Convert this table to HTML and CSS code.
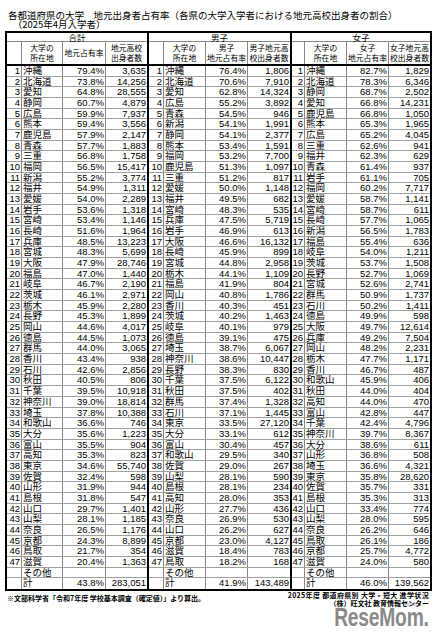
FILE: index.html
```html
<!DOCTYPE html>
<html lang="ja">
<head>
<meta charset="utf-8">
<link rel="stylesheet" href="styles.css">
</head>
<body>
<div class="title">
<p>各都道府県の大学　地元出身者占有率（各県の大学入学者における地元高校出身者の割合）</p>
<p>　（2025年4月入学者）</p>
</div>
<div class="tbl">
<div class="sec sec-all">
<div class="sec-h">合計</div>
<div class="hdr"><span></span><span>大学の<br>所在地</span><span>地元占有率</span><span>地元高校<br>出身者数</span></div>
<div class="row"><span class="rk">1</span><span class="pf">沖縄</span><span class="n">79.4%</span><span class="n">3,635</span></div>
<div class="row"><span class="rk">2</span><span class="pf">北海道</span><span class="n">73.8%</span><span class="n">14,256</span></div>
<div class="row"><span class="rk">3</span><span class="pf">愛知</span><span class="n">64.8%</span><span class="n">28,555</span></div>
<div class="row"><span class="rk">4</span><span class="pf">静岡</span><span class="n">60.7%</span><span class="n">4,879</span></div>
<div class="row"><span class="rk">5</span><span class="pf">広島</span><span class="n">59.9%</span><span class="n">7,937</span></div>
<div class="row"><span class="rk">6</span><span class="pf">熊本</span><span class="n">59.4%</span><span class="n">3,556</span></div>
<div class="row"><span class="rk">7</span><span class="pf">鹿児島</span><span class="n">57.9%</span><span class="n">2,147</span></div>
<div class="row"><span class="rk">8</span><span class="pf">青森</span><span class="n">57.7%</span><span class="n">1,883</span></div>
<div class="row"><span class="rk">9</span><span class="pf">三重</span><span class="n">56.8%</span><span class="n">1,758</span></div>
<div class="row"><span class="rk">10</span><span class="pf">福岡</span><span class="n">56.5%</span><span class="n">15,417</span></div>
<div class="row"><span class="rk">11</span><span class="pf">新潟</span><span class="n">55.2%</span><span class="n">3,774</span></div>
<div class="row"><span class="rk">12</span><span class="pf">福井</span><span class="n">54.9%</span><span class="n">1,311</span></div>
<div class="row"><span class="rk">13</span><span class="pf">愛媛</span><span class="n">54.0%</span><span class="n">2,289</span></div>
<div class="row"><span class="rk">14</span><span class="pf">岩手</span><span class="n">53.6%</span><span class="n">1,318</span></div>
<div class="row"><span class="rk">15</span><span class="pf">宮崎</span><span class="n">53.4%</span><span class="n">1,146</span></div>
<div class="row"><span class="rk">16</span><span class="pf">長崎</span><span class="n">51.6%</span><span class="n">1,964</span></div>
<div class="row"><span class="rk">17</span><span class="pf">兵庫</span><span class="n">48.5%</span><span class="n">13,223</span></div>
<div class="row"><span class="rk">18</span><span class="pf">宮城</span><span class="n">48.3%</span><span class="n">5,699</span></div>
<div class="row"><span class="rk">19</span><span class="pf">大阪</span><span class="n">47.9%</span><span class="n">28,746</span></div>
<div class="row"><span class="rk">20</span><span class="pf">福島</span><span class="n">47.0%</span><span class="n">1,440</span></div>
<div class="row"><span class="rk">21</span><span class="pf">岐阜</span><span class="n">46.7%</span><span class="n">2,190</span></div>
<div class="row"><span class="rk">22</span><span class="pf">茨城</span><span class="n">46.1%</span><span class="n">2,971</span></div>
<div class="row"><span class="rk">23</span><span class="pf">栃木</span><span class="n">45.9%</span><span class="n">2,280</span></div>
<div class="row"><span class="rk">24</span><span class="pf">長野</span><span class="n">45.3%</span><span class="n">1,899</span></div>
<div class="row"><span class="rk">25</span><span class="pf">岡山</span><span class="n">44.6%</span><span class="n">4,017</span></div>
<div class="row"><span class="rk">26</span><span class="pf">徳島</span><span class="n">44.5%</span><span class="n">1,073</span></div>
<div class="row"><span class="rk">27</span><span class="pf">群馬</span><span class="n">44.0%</span><span class="n">3,065</span></div>
<div class="row"><span class="rk">28</span><span class="pf">香川</span><span class="n">43.4%</span><span class="n">938</span></div>
<div class="row"><span class="rk">29</span><span class="pf">石川</span><span class="n">42.6%</span><span class="n">2,856</span></div>
<div class="row"><span class="rk">30</span><span class="pf">秋田</span><span class="n">40.5%</span><span class="n">806</span></div>
<div class="row"><span class="rk">31</span><span class="pf">千葉</span><span class="n">39.5%</span><span class="n">10,918</span></div>
<div class="row"><span class="rk">32</span><span class="pf">神奈川</span><span class="n">39.0%</span><span class="n">18,814</span></div>
<div class="row"><span class="rk">33</span><span class="pf">埼玉</span><span class="n">37.8%</span><span class="n">10,388</span></div>
<div class="row"><span class="rk">34</span><span class="pf">和歌山</span><span class="n">36.6%</span><span class="n">746</span></div>
<div class="row"><span class="rk">35</span><span class="pf">大分</span><span class="n">35.6%</span><span class="n">1,223</span></div>
<div class="row"><span class="rk">36</span><span class="pf">富山</span><span class="n">35.5%</span><span class="n">904</span></div>
<div class="row"><span class="rk">37</span><span class="pf">高知</span><span class="n">35.3%</span><span class="n">823</span></div>
<div class="row"><span class="rk">38</span><span class="pf">東京</span><span class="n">34.6%</span><span class="n">55,740</span></div>
<div class="row"><span class="rk">39</span><span class="pf">佐賀</span><span class="n">32.4%</span><span class="n">598</span></div>
<div class="row"><span class="rk">40</span><span class="pf">山形</span><span class="n">31.9%</span><span class="n">944</span></div>
<div class="row"><span class="rk">41</span><span class="pf">島根</span><span class="n">31.8%</span><span class="n">547</span></div>
<div class="row"><span class="rk">42</span><span class="pf">山口</span><span class="n">29.7%</span><span class="n">1,401</span></div>
<div class="row"><span class="rk">43</span><span class="pf">山梨</span><span class="n">28.1%</span><span class="n">1,185</span></div>
<div class="row"><span class="rk">44</span><span class="pf">奈良</span><span class="n">26.5%</span><span class="n">1,176</span></div>
<div class="row"><span class="rk">45</span><span class="pf">京都</span><span class="n">24.3%</span><span class="n">8,899</span></div>
<div class="row"><span class="rk">46</span><span class="pf">鳥取</span><span class="n">21.7%</span><span class="n">354</span></div>
<div class="row"><span class="rk">47</span><span class="pf">滋賀</span><span class="n">20.4%</span><span class="n">1,363</span></div>
<div class="row"><span class="rk"></span><span class="pf">その他</span><span class="n"></span><span class="n"></span></div>
<div class="row"><span class="rk"></span><span class="pf">計</span><span class="n">43.8%</span><span class="n">283,051</span></div>
</div>
<div class="sec sec-m">
<div class="sec-h">男子</div>
<div class="hdr"><span></span><span>大学の<br>所在地</span><span>男子<br>地元占有率</span><span>男子地元高<br>校出身者数</span></div>
<div class="row"><span class="rk">1</span><span class="pf">沖縄</span><span class="n">76.4%</span><span class="n">1,806</span></div>
<div class="row"><span class="rk">2</span><span class="pf">北海道</span><span class="n">70.6%</span><span class="n">7,910</span></div>
<div class="row"><span class="rk">3</span><span class="pf">愛知</span><span class="n">62.8%</span><span class="n">14,324</span></div>
<div class="row"><span class="rk">4</span><span class="pf">広島</span><span class="n">55.2%</span><span class="n">3,892</span></div>
<div class="row"><span class="rk">5</span><span class="pf">青森</span><span class="n">54.5%</span><span class="n">946</span></div>
<div class="row"><span class="rk">6</span><span class="pf">新潟</span><span class="n">54.1%</span><span class="n">1,991</span></div>
<div class="row"><span class="rk">7</span><span class="pf">静岡</span><span class="n">54.1%</span><span class="n">2,377</span></div>
<div class="row"><span class="rk">8</span><span class="pf">熊本</span><span class="n">53.4%</span><span class="n">1,591</span></div>
<div class="row"><span class="rk">9</span><span class="pf">福岡</span><span class="n">53.2%</span><span class="n">7,700</span></div>
<div class="row"><span class="rk">10</span><span class="pf">鹿児島</span><span class="n">51.3%</span><span class="n">1,097</span></div>
<div class="row"><span class="rk">11</span><span class="pf">三重</span><span class="n">51.2%</span><span class="n">817</span></div>
<div class="row"><span class="rk">12</span><span class="pf">愛媛</span><span class="n">50.0%</span><span class="n">1,148</span></div>
<div class="row"><span class="rk">13</span><span class="pf">福井</span><span class="n">49.5%</span><span class="n">682</span></div>
<div class="row"><span class="rk">14</span><span class="pf">宮崎</span><span class="n">48.3%</span><span class="n">535</span></div>
<div class="row"><span class="rk">15</span><span class="pf">兵庫</span><span class="n">47.5%</span><span class="n">5,719</span></div>
<div class="row"><span class="rk">16</span><span class="pf">岩手</span><span class="n">46.9%</span><span class="n">613</span></div>
<div class="row"><span class="rk">17</span><span class="pf">大阪</span><span class="n">46.6%</span><span class="n">16,132</span></div>
<div class="row"><span class="rk">18</span><span class="pf">長崎</span><span class="n">45.9%</span><span class="n">899</span></div>
<div class="row"><span class="rk">19</span><span class="pf">宮城</span><span class="n">44.8%</span><span class="n">2,958</span></div>
<div class="row"><span class="rk">20</span><span class="pf">栃木</span><span class="n">44.1%</span><span class="n">1,109</span></div>
<div class="row"><span class="rk">21</span><span class="pf">福島</span><span class="n">41.9%</span><span class="n">804</span></div>
<div class="row"><span class="rk">22</span><span class="pf">岡山</span><span class="n">40.8%</span><span class="n">1,786</span></div>
<div class="row"><span class="rk">23</span><span class="pf">香川</span><span class="n">40.3%</span><span class="n">451</span></div>
<div class="row"><span class="rk">24</span><span class="pf">茨城</span><span class="n">40.2%</span><span class="n">1,463</span></div>
<div class="row"><span class="rk">25</span><span class="pf">岐阜</span><span class="n">40.1%</span><span class="n">979</span></div>
<div class="row"><span class="rk">26</span><span class="pf">徳島</span><span class="n">39.1%</span><span class="n">475</span></div>
<div class="row"><span class="rk">27</span><span class="pf">埼玉</span><span class="n">38.7%</span><span class="n">6,067</span></div>
<div class="row"><span class="rk">28</span><span class="pf">神奈川</span><span class="n">38.6%</span><span class="n">10,447</span></div>
<div class="row"><span class="rk">29</span><span class="pf">長野</span><span class="n">38.3%</span><span class="n">830</span></div>
<div class="row"><span class="rk">30</span><span class="pf">千葉</span><span class="n">37.5%</span><span class="n">6,122</span></div>
<div class="row"><span class="rk">31</span><span class="pf">秋田</span><span class="n">37.5%</span><span class="n">402</span></div>
<div class="row"><span class="rk">32</span><span class="pf">群馬</span><span class="n">37.4%</span><span class="n">1,328</span></div>
<div class="row"><span class="rk">33</span><span class="pf">石川</span><span class="n">37.1%</span><span class="n">1,445</span></div>
<div class="row"><span class="rk">34</span><span class="pf">東京</span><span class="n">33.5%</span><span class="n">27,120</span></div>
<div class="row"><span class="rk">35</span><span class="pf">大分</span><span class="n">33.1%</span><span class="n">612</span></div>
<div class="row"><span class="rk">36</span><span class="pf">富山</span><span class="n">30.4%</span><span class="n">457</span></div>
<div class="row"><span class="rk">37</span><span class="pf">和歌山</span><span class="n">29.5%</span><span class="n">340</span></div>
<div class="row"><span class="rk">38</span><span class="pf">佐賀</span><span class="n">29.0%</span><span class="n">267</span></div>
<div class="row"><span class="rk">39</span><span class="pf">山梨</span><span class="n">28.1%</span><span class="n">590</span></div>
<div class="row"><span class="rk">40</span><span class="pf">島根</span><span class="n">28.1%</span><span class="n">234</span></div>
<div class="row"><span class="rk">41</span><span class="pf">高知</span><span class="n">28.0%</span><span class="n">353</span></div>
<div class="row"><span class="rk">42</span><span class="pf">山形</span><span class="n">27.7%</span><span class="n">436</span></div>
<div class="row"><span class="rk">43</span><span class="pf">奈良</span><span class="n">26.9%</span><span class="n">530</span></div>
<div class="row"><span class="rk">44</span><span class="pf">山口</span><span class="n">26.2%</span><span class="n">627</span></div>
<div class="row"><span class="rk">45</span><span class="pf">京都</span><span class="n">23.0%</span><span class="n">4,127</span></div>
<div class="row"><span class="rk">46</span><span class="pf">滋賀</span><span class="n">18.4%</span><span class="n">783</span></div>
<div class="row"><span class="rk">47</span><span class="pf">鳥取</span><span class="n">18.2%</span><span class="n">168</span></div>
<div class="row"><span class="rk"></span><span class="pf">その他</span><span class="n"></span><span class="n"></span></div>
<div class="row"><span class="rk"></span><span class="pf">計</span><span class="n">41.9%</span><span class="n">143,489</span></div>
</div>
<div class="sec sec-f">
<div class="sec-h">女子</div>
<div class="hdr"><span></span><span>大学の<br>所在地</span><span>女子<br>地元占有率</span><span>女子地元高<br>校出身者数</span></div>
<div class="row"><span class="rk">1</span><span class="pf">沖縄</span><span class="n">82.7%</span><span class="n">1,829</span></div>
<div class="row"><span class="rk">2</span><span class="pf">北海道</span><span class="n">78.3%</span><span class="n">6,346</span></div>
<div class="row"><span class="rk">3</span><span class="pf">静岡</span><span class="n">68.7%</span><span class="n">2,502</span></div>
<div class="row"><span class="rk">4</span><span class="pf">愛知</span><span class="n">66.8%</span><span class="n">14,231</span></div>
<div class="row"><span class="rk">5</span><span class="pf">鹿児島</span><span class="n">66.8%</span><span class="n">1,050</span></div>
<div class="row"><span class="rk">6</span><span class="pf">熊本</span><span class="n">65.3%</span><span class="n">1,965</span></div>
<div class="row"><span class="rk">7</span><span class="pf">広島</span><span class="n">65.2%</span><span class="n">4,045</span></div>
<div class="row"><span class="rk">8</span><span class="pf">三重</span><span class="n">62.6%</span><span class="n">941</span></div>
<div class="row"><span class="rk">9</span><span class="pf">福井</span><span class="n">62.3%</span><span class="n">629</span></div>
<div class="row"><span class="rk">10</span><span class="pf">青森</span><span class="n">61.4%</span><span class="n">937</span></div>
<div class="row"><span class="rk">11</span><span class="pf">岩手</span><span class="n">61.1%</span><span class="n">705</span></div>
<div class="row"><span class="rk">12</span><span class="pf">福岡</span><span class="n">60.2%</span><span class="n">7,717</span></div>
<div class="row"><span class="rk">13</span><span class="pf">愛媛</span><span class="n">58.7%</span><span class="n">1,141</span></div>
<div class="row"><span class="rk">14</span><span class="pf">宮崎</span><span class="n">58.7%</span><span class="n">611</span></div>
<div class="row"><span class="rk">15</span><span class="pf">長崎</span><span class="n">57.7%</span><span class="n">1,065</span></div>
<div class="row"><span class="rk">16</span><span class="pf">新潟</span><span class="n">56.5%</span><span class="n">1,783</span></div>
<div class="row"><span class="rk">17</span><span class="pf">福島</span><span class="n">55.4%</span><span class="n">636</span></div>
<div class="row"><span class="rk">18</span><span class="pf">岐阜</span><span class="n">54.0%</span><span class="n">1,211</span></div>
<div class="row"><span class="rk">19</span><span class="pf">茨城</span><span class="n">53.7%</span><span class="n">1,508</span></div>
<div class="row"><span class="rk">20</span><span class="pf">長野</span><span class="n">52.7%</span><span class="n">1,069</span></div>
<div class="row"><span class="rk">21</span><span class="pf">宮城</span><span class="n">52.6%</span><span class="n">2,741</span></div>
<div class="row"><span class="rk">22</span><span class="pf">群馬</span><span class="n">50.9%</span><span class="n">1,737</span></div>
<div class="row"><span class="rk">23</span><span class="pf">石川</span><span class="n">50.2%</span><span class="n">1,411</span></div>
<div class="row"><span class="rk">24</span><span class="pf">徳島</span><span class="n">49.9%</span><span class="n">598</span></div>
<div class="row"><span class="rk">25</span><span class="pf">大阪</span><span class="n">49.7%</span><span class="n">12,614</span></div>
<div class="row"><span class="rk">26</span><span class="pf">兵庫</span><span class="n">49.2%</span><span class="n">7,504</span></div>
<div class="row"><span class="rk">27</span><span class="pf">岡山</span><span class="n">48.2%</span><span class="n">2,231</span></div>
<div class="row"><span class="rk">28</span><span class="pf">栃木</span><span class="n">47.7%</span><span class="n">1,171</span></div>
<div class="row"><span class="rk">29</span><span class="pf">香川</span><span class="n">46.7%</span><span class="n">487</span></div>
<div class="row"><span class="rk">30</span><span class="pf">和歌山</span><span class="n">45.9%</span><span class="n">406</span></div>
<div class="row"><span class="rk">31</span><span class="pf">秋田</span><span class="n">44.0%</span><span class="n">404</span></div>
<div class="row"><span class="rk">32</span><span class="pf">高知</span><span class="n">44.0%</span><span class="n">470</span></div>
<div class="row"><span class="rk">33</span><span class="pf">富山</span><span class="n">42.8%</span><span class="n">447</span></div>
<div class="row"><span class="rk">34</span><span class="pf">千葉</span><span class="n">42.4%</span><span class="n">4,796</span></div>
<div class="row"><span class="rk">35</span><span class="pf">神奈川</span><span class="n">39.7%</span><span class="n">8,367</span></div>
<div class="row"><span class="rk">36</span><span class="pf">大分</span><span class="n">38.6%</span><span class="n">611</span></div>
<div class="row"><span class="rk">37</span><span class="pf">山形</span><span class="n">36.8%</span><span class="n">508</span></div>
<div class="row"><span class="rk">38</span><span class="pf">埼玉</span><span class="n">36.6%</span><span class="n">4,321</span></div>
<div class="row"><span class="rk">39</span><span class="pf">東京</span><span class="n">35.8%</span><span class="n">28,620</span></div>
<div class="row"><span class="rk">40</span><span class="pf">佐賀</span><span class="n">35.7%</span><span class="n">331</span></div>
<div class="row"><span class="rk">41</span><span class="pf">島根</span><span class="n">35.3%</span><span class="n">313</span></div>
<div class="row"><span class="rk">42</span><span class="pf">山口</span><span class="n">33.4%</span><span class="n">774</span></div>
<div class="row"><span class="rk">43</span><span class="pf">山梨</span><span class="n">28.0%</span><span class="n">595</span></div>
<div class="row"><span class="rk">44</span><span class="pf">奈良</span><span class="n">26.2%</span><span class="n">646</span></div>
<div class="row"><span class="rk">45</span><span class="pf">鳥取</span><span class="n">26.1%</span><span class="n">186</span></div>
<div class="row"><span class="rk">46</span><span class="pf">京都</span><span class="n">25.7%</span><span class="n">4,772</span></div>
<div class="row"><span class="rk">47</span><span class="pf">滋賀</span><span class="n">24.0%</span><span class="n">580</span></div>
<div class="row"><span class="rk"></span><span class="pf">その他</span><span class="n"></span><span class="n"></span></div>
<div class="row"><span class="rk"></span><span class="pf">計</span><span class="n">46.0%</span><span class="n">139,562</span></div>
</div>
</div>
<div class="foot">
<p class="src">※文部科学省「令和7年度 学校基本調査（確定値）」より算出。</p>
<div class="credit">
<p class="credit-1">2025年度 都道府県別 大学・短大 進学状況</p>
<p>（株）旺文社 教育情報センター</p>
<div class="logo"><span class="logo-word">ReseMom.</span><span class="logo-kana">リセマム</span></div>
</div>
</div>
</body>
</html>
```
FILE: styles.css
```css
* {
  box-sizing: border-box;
  margin: 0;
  padding: 0;
}

body {
  width: 444px;
  height: 640px;
  background: #fff;
  color: #000;
  font-family: "Noto Sans CJK JP", "Noto Sans", sans-serif;
  overflow: hidden;
}

.title {
  padding: 10.5px 0 0 8px;
  margin-bottom: 1px;
  font-size: 9.5px;
  line-height: 9.75px;
  white-space: nowrap;
}

.tbl {
  display: flex;
  width: 427px;
  margin-left: 5px;
  border: 2px solid #000;
}

.sec {
  display: flex;
  flex-direction: column;
}

.sec:not(:last-child) {
  border-right: 2px solid #000;
}

.sec-all { --cols: 15px 41px 43px 41px; }
.sec-m { --cols: 15px 42px 42px 42px; }
.sec-f { --cols: 13px 42px 42px 41px; }

.sec-h {
  height: 9px;
  border-bottom: 1px solid #888;
  text-align: center;
  font-size: 8.5px;
  line-height: 8px;
}

.hdr {
  display: grid;
  grid-template-columns: var(--cols);
  height: 24px;
  border-bottom: 2px solid #000;
}

.hdr > span {
  display: flex;
  align-items: center;
  justify-content: center;
  text-align: center;
  border-right: 1px solid #888;
  font-size: 7.8px;
  line-height: 10px;
  white-space: nowrap;
}

.hdr > span:last-child,
.row > span:last-child {
  border-right: 0;
}

.row {
  display: grid;
  grid-template-columns: var(--cols);
  height: 10.68px;
  border-bottom: 1px solid #a0a0a0;
  line-height: 9.68px;
  white-space: nowrap;
}

.row:last-child {
  border-bottom: 0;
}

.row > span {
  border-right: 1px solid #888;
}

.rk {
  text-align: right;
  padding-right: 1px;
  font-family: "Liberation Sans", Arial, sans-serif;
  font-size: 9.5px;
}

.pf {
  padding-left: 1px;
  font-size: 9.5px;
}

.n {
  text-align: right;
  padding-right: 1px;
  font-family: "Liberation Sans Narrow", "Liberation Sans", Arial, sans-serif;
  font-size: 9.5px;
}

.foot {
  display: flex;
  justify-content: space-between;
  width: 427px;
  margin-left: 5px;
  font-size: 7px;
  line-height: 8px;
  font-weight: bold;
  white-space: nowrap;
}

.src {
  margin-top: 3px;
  padding-left: 2px;
}

.credit {
  position: relative;
  text-align: right;
  padding-right: 3px;
}

.credit-1 {
  letter-spacing: 0.35px;
}

.logo {
  position: relative;
  height: 22px;
  margin-top: -1px;
}

.logo-word {
  display: inline-block;
  font-family: "Liberation Sans", Arial, sans-serif;
  font-weight: bold;
  font-size: 26px;
  line-height: 22px;
  letter-spacing: -0.3px;
  color: #8a8a8a;
  transform: scaleX(0.74);
  transform-origin: right center;
}

.logo-kana {
  position: absolute;
  right: 12px;
  top: -3px;
  font-size: 3.5px;
  line-height: 4px;
  font-weight: normal;
  color: #888;
}
```
